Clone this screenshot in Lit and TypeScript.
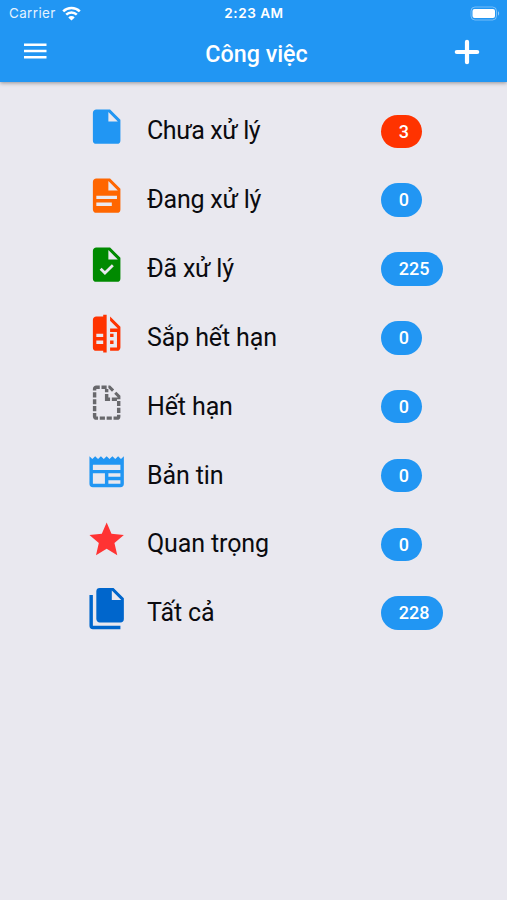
import { LitElement, html, svg, css } from "lit";
import { customElement } from "lit/decorators.js";

interface Item {
  label: string;
  count: number;
  tone: string;
  urgent?: boolean;
  path: string;
  check?: boolean;
}

const FILE = "M13,9V3.5L18.5,9M6,2C4.89,2 4,2.89 4,4V20A2,2 0 0,0 6,22H18A2,2 0 0,0 20,20V8L14,2H6Z";

const ITEMS: Item[] = [
  { label: "Chưa xử lý", count: 3, tone: "blue", urgent: true, path: FILE },
  {
    label: "Đang xử lý", count: 0, tone: "orange",
    path: "M13,9H18.5L13,3.5V9M6,2H14L20,8V20A2,2 0 0,1 18,22H6C4.89,22 4,21.1 4,20V4C4,2.89 4.89,2 6,2M15,18V16H6V18H15M18,14V12H6V14H18Z",
  },
  { label: "Đã xử lý", count: 225, tone: "green", path: FILE, check: true },
  {
    label: "Sắp hết hạn", count: 0, tone: "scarlet",
    path: "M10,18H6V16H10V18M10,14H6V12H10V14M10,1V2H6C4.89,2 4,2.89 4,4V20A2,2 0 0,0 6,22H10V23H12V1H10M20,8V20C20,21.11 19.11,22 18,22H14V20H18V11H14V9H18.5L14,4.5V2L20,8M16,14H14V12H16V14M16,18H14V16H16V18Z",
  },
  {
    label: "Hết hạn", count: 0, tone: "gray",
    path: "M13,9H14V11H11V7H13V9M18.5,9L16.38,6.88L17.63,5.63L20,8V10H18V11H15V9H18.5M13,3.5V2H12V4H13V6H11V4H9V2H8V4H6V5H4V4C4,2.89 4.89,2 6,2H14L16.36,4.36L15.11,5.61L13,3.5M20,20A2,2 0 0,1 18,22H16V20H18V19H20V20M18,15H20V18H18V15M12,22V20H15V22H12M8,22V20H11V22H8M6,22C4.89,22 4,21.1 4,20V18H6V20H7V22H6M4,14H6V17H4V14M4,10H6V13H4V10M18,11H20V14H18V11M4,6H6V9H4V6Z",
  },
  {
    label: "Bản tin", count: 0, tone: "blue",
    path: "M20 11H4V8H20M20 15H13V13H20M20 19H13V17H20M11 19H4V13H11M20.33 4.67L18.67 3L17 4.67L15.33 3L13.67 4.67L12 3L10.33 4.67L8.67 3L7 4.67L5.33 3L3.67 4.67L2 3V19A2 2 0 0 0 4 21H20A2 2 0 0 0 22 19V3L20.33 4.67Z",
  },
  {
    label: "Quan trọng", count: 0, tone: "red",
    path: "M12,17.27L18.18,21L16.54,13.97L22,9.24L14.81,8.62L12,2L9.19,8.62L2,9.24L7.45,13.97L5.82,21L12,17.27Z",
  },
  {
    label: "Tất cả", count: 228, tone: "navy",
    path: "M15,7H20.5L15,1.5V7M8,0H16L22,6V18A2,2 0 0,1 20,20H8C6.89,20 6,19.1 6,18V2A2,2 0 0,1 8,0M4,4V22H20V24H4A2,2 0 0,1 2,22V4H4Z",
  },
];

@customElement("status-bar")
export class StatusBar extends LitElement {
  static styles = css`
    :host {
      display: grid;
      grid-template-columns: 1fr auto 1fr;
      align-items: center;
      height: 27px;
      padding: 0 7px 0 9px;
      box-sizing: border-box;
      color: #fff;
      font: 400 13.4px/27px Inter, sans-serif;
    }
    .left { display: flex; align-items: center; gap: 6px; color: #e4f2fe; letter-spacing: 0.4px; }
    .time { font-weight: 600; font-size: 13.6px; letter-spacing: 0.5px; margin-left: -1px; }
    .battery { justify-self: end; }
    svg { display: block; }
  `;

  render() {
    return html`
      <div class="left">
        <span>Carrier</span>
        <svg width="19" height="15" viewBox="0 0 19 15" fill="none" stroke="#fff" stroke-width="2.5">
          <path d="M1.2 5.4a11.8 11.8 0 0 1 16.6 0M4.2 8.6a7.5 7.5 0 0 1 10.6 0" />
          <path d="M9.5 14.6L6.3 11.4a4.5 4.5 0 0 1 6.4 0z" fill="#fff" stroke="none" />
        </svg>
      </div>
      <span class="time">2:23 AM</span>
      <svg class="battery" width="30" height="15" viewBox="0 0 30 15">
        <rect x="1" y="1" width="25.5" height="13" rx="4" fill="none" stroke="#fff" stroke-opacity=".38" />
        <rect x="2.5" y="3" width="22.5" height="9" rx="2" fill="#fff" />
        <path d="M28 5.3v4.4c1.5-.6 1.5-3.8 0-4.4z" fill="#fff" fill-opacity=".5" />
      </svg>
    `;
  }
}

@customElement("app-root")
export class AppRoot extends LitElement {
  static styles = css`
    :host {
      display: flex;
      flex-direction: column;
      height: 900px;
      overflow: hidden;
      background: #e9e8ef;
      font-family: Roboto, "Noto Sans", sans-serif;
      color: #0b0b0f;
    }
    header {
      flex: none;
      height: 82px;
      background: #2196f3;
      box-shadow: 0 1px 4px rgba(0, 0, 0, 0.38);
    }
    .toolbar {
      display: grid;
      grid-template-columns: 1fr auto 1fr;
      grid-template-rows: 51px;
      align-items: center;
      height: 51px;
      padding: 0 27px 0 24px;
      color: #fff;
    }
    .toolbar svg { display: block; margin-bottom: 4px; }
    .toolbar .add { justify-self: end; margin-bottom: 2px; }
    h1 { margin: 2px -4px 0 5px; font-size: 23.3px; line-height: 50px; font-weight: 500; }
    ul {
      list-style: none;
      margin: 0;
      padding: 14.4px 0 0 86.2px;
    }
    li {
      display: grid;
      grid-template-columns: 60.8px 233.7px auto;
      align-items: center;
      justify-items: start;
      height: 68.85px;
    }
    .icon { display: block; width: 41.3px; height: 41.3px; margin-bottom: 7.6px; }
    .label {
      font-size: 25px;
      line-height: 34px;
      letter-spacing: -0.12px;
      padding-top: 1px;
      white-space: nowrap;
    }
    li:nth-child(-n + 3) .label { letter-spacing: -0.22px; }
    li:first-child .label { letter-spacing: -0.4px; }
    .badge {
      height: 33.5px;
      padding: 0 13.5px 0 18px;
      border-radius: 17px;
      background: #2196f3;
      color: #fff;
      font-size: 18px;
      line-height: 34.5px;
      font-weight: 500;
      margin-top: 1px;
    }
    .badge.urgent { background: #ff3300; }
    .blue { fill: #2196f3; }
    .orange { fill: #ff6600; }
    .green { fill: #008a00; }
    .scarlet { fill: #ff3300; }
    .gray { fill: #68686c; }
    .red { fill: #ff3333; }
    .navy { fill: #0066cc; }
    .check { fill: none; stroke: #e9e8ef; stroke-width: 1.6; }
  `;

  private row(item: Item) {
    return html`
      <li>
        <svg class="icon ${item.tone}" viewBox="0 0 24 24">
          <path d=${item.path} />
          ${item.check ? svg`<path class="check" d="M8.5 14.4L11 16.9L15.6 12.3" />` : null}
        </svg>
        <span class="label">${item.label}</span>
        <span class="badge ${item.urgent ? "urgent" : ""}">${item.count}</span>
      </li>
    `;
  }

  render() {
    return html`
      <header>
        <status-bar></status-bar>
        <div class="toolbar">
          <svg width="23" height="16" viewBox="0 0 23 16" fill="#fff">
            <path d="M0 .5h22.5v2.6H0zM0 6.7h22.5v2.6H0zM0 12.9h22.5v2.6H0z" />
          </svg>
          <h1>Công việc</h1>
          <svg class="add" width="26" height="26" viewBox="0 0 26 26" stroke="#fff" stroke-width="4.2" stroke-linecap="round">
            <path d="M13 2.8v20.4M2.8 13h20.4" />
          </svg>
        </div>
      </header>
      <ul>${ITEMS.map((item) => this.row(item))}</ul>
    `;
  }
}
